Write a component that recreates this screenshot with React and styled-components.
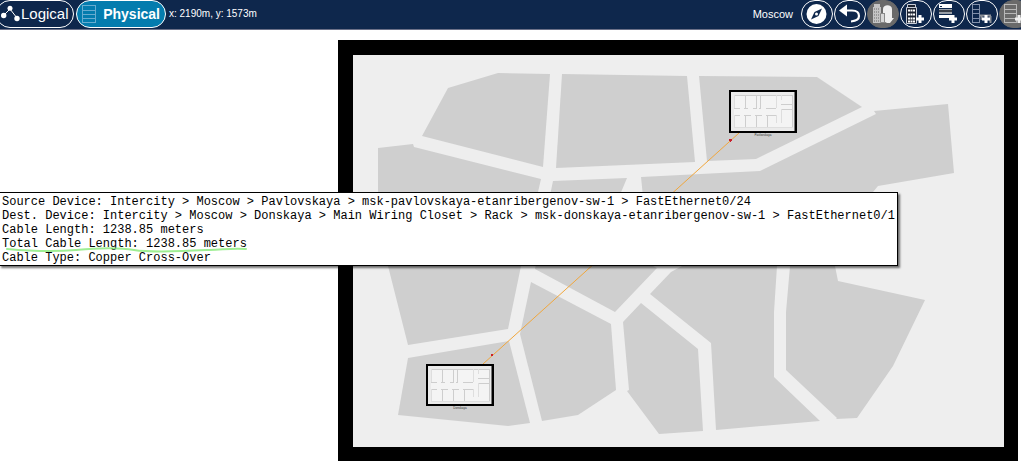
import React from 'react';
import styled, { createGlobalStyle, css } from 'styled-components';

const GlobalStyle = createGlobalStyle`
  * { box-sizing: border-box; }
  body {
    margin: 0;
    background: #fff;
    color: #000;
    font-family: "Liberation Sans", Arial, sans-serif;
    overflow: hidden;
  }
`;

const Page = styled.div`
  position: relative;
`;

const Toolbar = styled.header`
  display: flex;
  align-items: flex-start;
  justify-content: space-between;
  height: 30px;
  background: #0e274c;
  border-bottom: 1px solid #6b7088;
  color: #fff;
  overflow: hidden;
`;

const Group = styled.div`
  display: flex;
  flex: none;
  align-items: center;
  height: 28px;
  gap: ${(p) => p.$gap}px;
  margin-left: ${(p) => (p.$bleed === 'left' ? '-4px' : '0')};
  margin-right: ${(p) => (p.$bleed === 'right' ? '-10px' : '0')};
`;

const ModeButton = styled.button`
  display: flex;
  align-items: center;
  justify-content: space-between;
  height: 28px;
  width: ${(p) => (p.$active ? 90 : 78)}px;
  padding: 0 5px 0 4px;
  border: 1px solid #fff;
  border-radius: 14px;
  background: ${(p) => (p.$active ? '#047cae' : '#0e274c')};
  color: #fff;
  font-family: inherit;
  font-size: ${(p) => (p.$active ? 14 : 15)}px;
  font-weight: ${(p) => (p.$active ? 700 : 400)};
  line-height: 20px;
`;

const Readout = styled.span`
  font-size: 10px;
  line-height: 14px;
  padding-left: 1px;
`;

const Place = styled.span`
  font-size: 11px;
  line-height: 14px;
  padding-right: 7px;
`;

const ToolButton = styled.button`
  display: grid;
  place-items: center;
  width: 32px;
  height: 28px;
  padding: 0;
  border: 1px solid #fff;
  border-radius: 14px;
  background: #0e274c;
  color: #fff;
  ${(p) =>
    p.disabled &&
    css`
      border-color: #6a6a6a;
      background: #6a6a6a;
      color: #d4d4d4;
    `}
`;

const Icon = styled.svg`
  display: block;
  flex: none;
`;

const Workspace = styled.main`
  padding: 10px 3px 2px 338px;
`;

const MapFrame = styled.section`
  border: 15px solid #000;
  border-right-width: 14px;
  border-bottom-width: 14px;
  background: #eee;
`;

const MapSvg = styled.svg`
  display: block;
  width: 100%;
  height: auto;
`;

const Tooltip = styled.div`
  position: absolute;
  top: 192px;
  left: -1px;
  padding: 2px 2px 0;
  border: 1px solid #000;
  background: #fff;
  box-shadow: 2px 2px 2px rgba(0, 0, 0, 0.55);
  font-family: "Liberation Mono", "Courier New", monospace;
  font-size: 12px;
  line-height: 14px;
  white-space: nowrap;
`;

const TooltipLine = styled.div`
  position: relative;
`;

const Highlight = styled.svg`
  position: absolute;
  left: 2px;
  top: 7px;
  overflow: visible;
`;

const Plus = ({ x, y, color = 'currentColor' }) => (
  <path d={`M${x} ${y - 4}v8M${x - 4} ${y}h8`} stroke={color} strokeWidth="3" fill="none" />
);

function TopologyIcon() {
  return (
    <Icon width="20" height="18" viewBox="0 0 20 18">
      <path d="M3 10 9 4 16 13" fill="none" stroke="#fff" strokeWidth="1" />
      <circle cx="2.7" cy="10.5" r="2.7" fill="#fff" />
      <circle cx="9" cy="3.2" r="2.5" fill="#fff" />
      <circle cx="16" cy="13.5" r="2.7" fill="#fff" />
    </Icon>
  );
}

function RackIcon() {
  return (
    <Icon width="16" height="20" viewBox="0 0 16 20">
      <path d="M1.5 1v18M14.5 1v18M1 1.5h14M1 6.5h14M1 10.5h14M1 14.5h14M1 18.5h14" fill="none" stroke="#67acd0" />
    </Icon>
  );
}

function CompassIcon() {
  return (
    <Icon width="30" height="26" viewBox="0 0 30 26">
      <circle cx="14.500" cy="13" r="10" fill="#fff" />
      <path d="m20 7.500-3.500 7.500-7.500 3.500 3.500-7.500z" fill="#0e274c" />
      <circle cx="14.500" cy="13" r="1.500" fill="#fff" />
    </Icon>
  );
}

function BackIcon() {
  return (
    <Icon width="30" height="26" viewBox="0 0 30 26">
      <path d="M10 9.500h7c5 0 7 2.500 7 5.500s-3 5-8 5.500" fill="none" stroke="#fff" strokeWidth="2.200" />
      <path d="m4 9.500 8-6v12z" fill="#fff" />
    </Icon>
  );
}

function CityIcon() {
  return (
    <Icon width="30" height="26" viewBox="0 0 30 26">
      <path d="M5 6h1V3h6v3h1v16H5z" fill="#c4c4c4" />
      <path d="M6 8h6M6 11h6M6 14h6M6 17h6M6 20h6" stroke="#6a6a6a" strokeDasharray="1 1" fill="none" />
      <path d="M12.500 12.500h4v9h-4z" fill="#d8d8d8" stroke="#8a8a8a" />
      <path d="M15 8c0-5 9-5 9 0v9h2l-4 5h-3l-2-1v-9h-2z" fill="#efefef" />
    </Icon>
  );
}

function AddBuildingIcon() {
  return (
    <Icon width="30" height="26" viewBox="0 0 30 26">
      <path d="M6.500 3.500h8v3h-8zM5.500 6.500h10v16h-10z" fill="#1b2230" stroke="#c9ced8" />
      <path d="M7 9.500h7M7 13.500h7M7 17.500h7M7 20.500h7" stroke="#fff" strokeWidth="2" strokeDasharray="2 .5" fill="none" />
      <Plus x={19} y={18} color="#fff" />
    </Icon>
  );
}

function AddClosetIcon() {
  return (
    <Icon width="30" height="26" viewBox="0 0 30 26">
      <path d="M5 3h13v4H5z" fill="#fff" />
      <path d="M5 8h13v5H5z" fill="#9aa0a8" />
      <path d="M5 9h13v2H5z" fill="#3a3f48" />
      <path d="M5 14h13v3H5z" fill="#fff" />
      <path d="M6 5.500h2" stroke="#0e274c" fill="none" />
      <Plus x={19} y={18} color="#fff" />
    </Icon>
  );
}

function AddRackIcon() {
  return (
    <Icon width="30" height="26" viewBox="0 0 30 26">
      <path d="M5.500 3v19M12.500 3v19M5 3.500h8M5 8.500h8M5 12.500h8M5 17.500h8M5 21.500h8" stroke="#8290aa" fill="none" />
      <path d="M13 14.500h11M14.500 15v4M23.500 15v7" stroke="#8b8f96" strokeWidth="2" fill="none" />
      <Plus x={19} y={18} color="#fff" />
    </Icon>
  );
}

function AddShelfIcon() {
  return (
    <Icon width="30" height="26" viewBox="0 0 30 26">
      <path d="M4.500 3v19M16.500 3v19M4 3.500h13M4 8.500h13M4 12.500h13M4 17.500h13M4 21.500h13" stroke="#b8b8b8" fill="none" />
      <Plus x={19} y={18} color="#eee" />
    </Icon>
  );
}

const tools = [
  { label: 'Navigation', icon: CompassIcon },
  { label: 'Back', icon: BackIcon },
  { label: 'New city', icon: CityIcon, disabled: true },
  { label: 'New building', icon: AddBuildingIcon },
  { label: 'New closet', icon: AddClosetIcon },
  { label: 'New rack', icon: AddRackIcon },
  { label: 'New shelf', icon: AddShelfIcon, disabled: true },
];

const blocks = [
  '448,88 498,73 550,74 543,167 422,136',
  '562,74 687,76 695,162 556,168',
  '699,76 817,77 862,107 756,159 707,161',
  '378,148 413,144 414,147 541,179 521,266 508,329 408,345 388,266 378,226',
  '553,181 627,178 601,240 657,268 615,312 535,269',
  '641,177 760,171 876,114 874,111 948,104 954,173 878,186 873,192 835,266 650,266',
  '650,294 671,272 682,266 777,266 774,312 774,377 820,421 716,430 711,343',
  '790,266 835,266 838,281 925,300 893,366 857,418 836,419 837,418 786,370 786,312',
  '531,282 611,324 616,390 578,415 542,421 520,334',
  '641,303 623,322 629,390 627,391 659,434 703,431 698,349',
  '408,358 509,341 530,423 508,426 398,415',
];

const buildings = [
  { name: 'Pavlovskaya', x: 729, y: 90, height: 43 },
  { name: 'Donskaya', x: 426, y: 364, height: 42 },
];

function FloorPlan({ name, x, y, height }) {
  return (
    <g transform={`translate(${x} ${y})`}>
      <rect x="1" y="1" width="66" height={height - 2} fill="#ebebeb" stroke="#000" strokeWidth="2" />
      <path d={`M65.500 2v${height - 4}`} stroke="#777" />
      <rect x="5" y="5" width="59" height="33" fill="#f4f4f4" />
      <path
        d="M5 5.500h59M63.500 5v33M16.500 5v13M27.500 5v13M31.500 5v13M5 18.500h6M15 18.500h4M24 18.500h4M30 18.500h2M37 18.500h10M52 14.500h12M52 19.500h12M5 25.500h6M15 25.500h7M26 25.500h7M37 25.500h10M16.500 25v13M27.500 25v13M38.500 25v13"
        fill="none"
        stroke="#cecece"
      />
      <path d="M5.500 5v13M5.500 25v13M5 37.500h59M47.500 5v13M52.500 5v5M52.500 19v14M47.500 25v8" fill="none" stroke="#dedede" />
      <text x="34" y={height + 3} textAnchor="middle" fontSize="3" fill="#333">
        {name}
      </text>
    </g>
  );
}

function CityMap() {
  return (
    <MapSvg viewBox="353 55 651 392" role="img" aria-label="Moscow">
      {blocks.map((points) => (
        <polygon key={points} points={points} fill="#cfcfcf" />
      ))}
      <path d="M739 133 483 364" stroke="#f0a63c" strokeWidth="1" fill="none" />
      <path d="M729 139h3v2h-1v1h-1v-1h-1z" fill="#c8202c" />
      <rect x="491" y="354" width="2" height="2" fill="#c8202c" />
      {buildings.map((b) => (
        <FloorPlan key={b.name} {...b} />
      ))}
    </MapSvg>
  );
}

const details = [
  'Source Device: Intercity > Moscow > Pavlovskaya > msk-pavlovskaya-etanribergenov-sw-1 > FastEthernet0/24',
  'Dest. Device: Intercity > Moscow > Donskaya > Main Wiring Closet > Rack > msk-donskaya-etanribergenov-sw-1 > FastEthernet0/1',
  'Cable Length: 1238.85 meters',
  'Total Cable Length: 1238.85 meters',
  'Cable Type: Copper Cross-Over',
];

export default function App() {
  return (
    <Page>
      <GlobalStyle />
      <Toolbar>
        <Group $gap={2} $bleed="left">
          <ModeButton type="button">
            <TopologyIcon />
            Logical
          </ModeButton>
          <ModeButton type="button" $active>
            <RackIcon />
            Physical
          </ModeButton>
          <Readout>x: 2190m, y: 1573m</Readout>
        </Group>
        <Group $gap={1} $bleed="right">
          <Place>Moscow</Place>
          {tools.map(({ label, icon: ToolIcon, disabled }) => (
            <ToolButton key={label} type="button" aria-label={label} disabled={disabled}>
              <ToolIcon />
            </ToolButton>
          ))}
        </Group>
      </Toolbar>
      <Workspace>
        <MapFrame>
          <CityMap />
        </MapFrame>
      </Workspace>
      <Tooltip role="tooltip">
        {details.map((line) => (
          <TooltipLine key={line}>
            {line}
            {line.startsWith('Total') && (
              <Highlight width="244" height="8" viewBox="0 0 244 8" aria-hidden="true">
                <path
                  d="M3 5C25 7 50 8 72 6s40-3 58 0 55 1 75 0 26-2 37-1"
                  fill="none"
                  stroke="#7ee86f"
                  strokeOpacity="0.75"
                  strokeWidth="2"
                  strokeLinecap="round"
                />
              </Highlight>
            )}
          </TooltipLine>
        ))}
      </Tooltip>
    </Page>
  );
}
